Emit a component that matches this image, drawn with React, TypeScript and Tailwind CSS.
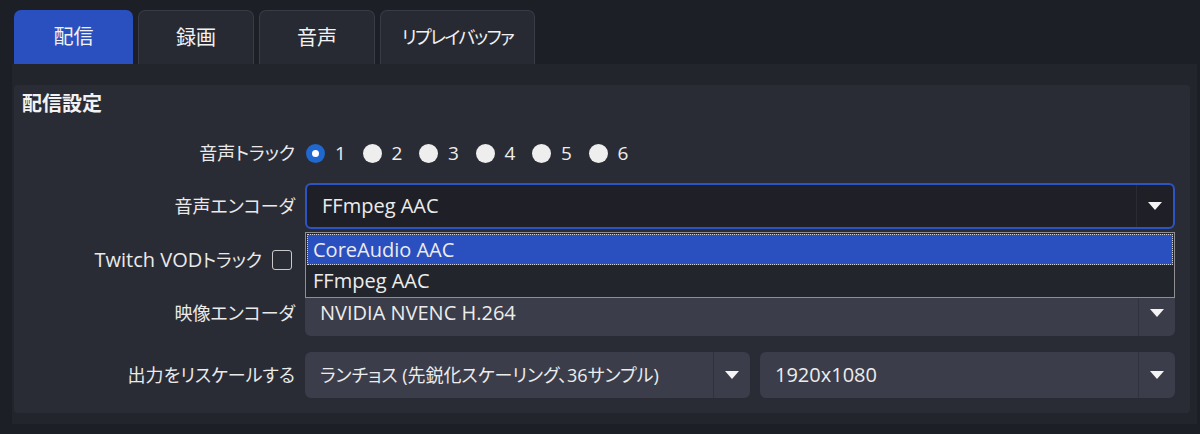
const font = "font-['Open_Sans','Noto_Sans_CJK_JP',sans-serif] [font-feature-settings:'palt']";

function Arrow() {
  return (
    <svg width="14" height="8" viewBox="0 0 14 8">
      <path d="M0 0 H14 L7 8 Z" fill="#f4f4f4" />
    </svg>
  );
}

function Select({
  value,
  focused,
  className = "",
  textSize = "text-[20px]",
}: {
  value: string;
  focused?: boolean;
  className?: string;
  textSize?: string;
}) {
  return (
    <div
      className={`flex h-full items-stretch rounded-[6px] ${
        focused
          ? "border-2 border-[#2e54c4] bg-[#1f2027]"
          : "bg-[#3b3d4a]"
      } ${className}`}
    >
      <div className={`flex flex-1 items-center pl-[15px] ${textSize} text-[#ececec] whitespace-nowrap`}>
        {value}
      </div>
      <div
        className={`flex w-[37px] items-center justify-center border-l ${
          focused ? "border-[#2a2b33]" : "border-[#30323d]"
        }`}
      >
        <Arrow />
      </div>
    </div>
  );
}

function Row({
  label,
  height,
  children,
}: {
  label: React.ReactNode;
  height: string;
  children?: React.ReactNode;
}) {
  return (
    <div className={`flex items-center gap-[10px] ${height}`}>
      <div className="flex w-[281px] items-center justify-end text-[18px] text-[#eaeaea] whitespace-nowrap">
        {label}
      </div>
      <div className="relative flex h-full flex-1 items-center">{children}</div>
    </div>
  );
}

const tabs = [
  { name: "配信", w: "w-[119px]", t: "text-[20px]" },
  { name: "録画", w: "w-[116px]", t: "text-[20px]" },
  { name: "音声", w: "w-[116px]", t: "text-[20px]" },
  { name: "リプレイバッファ", w: "w-[155px]", t: "text-[18px] tracking-[-1.5px]" },
];

export default function App() {
  return (
    <div className={`h-[434px] w-[1200px] overflow-hidden bg-[#1d1f26] pl-[12px] pr-[3px] pt-[10px] ${font}`}>
      {/* タブ */}
      <div className="flex h-[54px] gap-[5px] pl-[2px]">
        {tabs.map((t, i) => (
          <div
            key={t.name}
            className={`flex ${t.w} items-center justify-center rounded-t-[7px] ${t.t} text-[#f2f2f2] ${
              i === 0
                ? "bg-[#2a50c0]"
                : "border border-b-0 border-[#393b45] bg-[#282a33]"
            }`}
          >
            {t.name}
          </div>
        ))}
      </div>

      {/* タブの中身 */}
      <div className="h-[360px] bg-[#23252d] pl-[2px] pr-[7px] pt-[21px]">
        <div className="flex h-[328px] flex-col rounded-[4px] bg-[#2a2c35] pl-[8px] pr-[15px] pt-[7px]">
          <div className="h-[24px] text-[20px] font-bold leading-[24px] text-[#f2f2f2]">
            配信設定
          </div>

          <div className="-ml-[8px] mt-[23px] flex flex-col gap-[16px]">
            <Row label="音声トラック" height="h-[28px]">
              <div className="flex items-center text-[19px] text-[#eeeeee]">
                {[1, 2, 3, 4, 5, 6].map(n => (
                  <div key={n} className="flex w-[56.5px] items-center gap-[10px] pl-[1px]">
                    {n === 1 ? (
                      <span className="flex h-[19px] w-[19px] items-center justify-center rounded-full bg-[#1f68d0]">
                        <span className="h-[7px] w-[7px] rounded-full bg-white" />
                      </span>
                    ) : (
                      <span className="h-[19px] w-[19px] rounded-full bg-[#eeeeee]" />
                    )}
                    <span>{n}</span>
                  </div>
                ))}
              </div>
            </Row>

            <Row label="音声エンコーダ" height="h-[46px]">
              <Select value="FFmpeg AAC" focused className="w-full" />
              {/* ドロップダウン */}
              <div className="absolute left-0 right-0 top-[calc(100%+3px)] z-10 border border-[#8f8f91] bg-[#23252c] p-[1px] text-[20px] text-[#ececec]">
                <div className="flex h-[31px] items-center border border-dotted border-[#d0d3dc] bg-[#2a4fbf] pl-[5px]">
                  CoreAudio AAC
                </div>
                <div className="flex h-[31px] items-center pl-[6px]">FFmpeg AAC</div>
              </div>
            </Row>

            <Row
              label={
                <div className="flex items-center gap-[10px] pr-[3px]">
                  <span>
                    <span className="text-[20px]">Twitch VOD</span>トラック
                  </span>
                  <span className="h-[20px] w-[20px] rounded-[3px] border-[1.5px] border-[#c9c9cc]" />
                </div>
              }
              height="h-[29px]"
            />

            <Row label="映像エンコーダ" height="h-[46px]">
              <Select value="NVIDIA NVENC H.264" className="w-full" />
            </Row>

            <Row label="出力をリスケールする" height="h-[46px]">
              <div className="flex h-full w-full gap-[10px]">
                <Select
                  value="ランチョス (先鋭化スケーリング、36サンプル)"
                  textSize="text-[18px]"
                  className="w-[445px]"
                />
                <Select value="1920x1080" className="flex-1" />
              </div>
            </Row>
          </div>
        </div>
      </div>
    </div>
  );
}
